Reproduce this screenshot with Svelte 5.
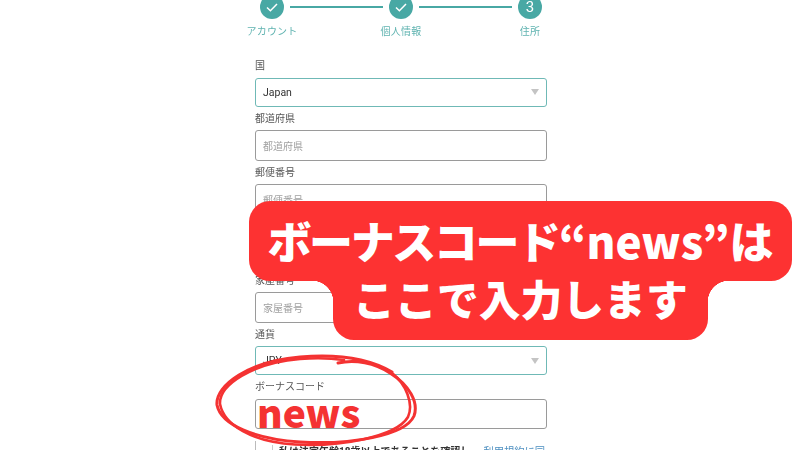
<script lang="ts">
	const steps = [
		{ label: "アカウント", done: true },
		{ label: "個人情報", done: true },
		{ label: "住所", done: false, num: 3 }
	];

	const fields = [
		{ label: "国", value: "Japan", select: true },
		{ label: "都道府県", placeholder: "都道府県" },
		{ label: "郵便番号", placeholder: "郵便番号" },
		{ label: "住所", placeholder: "住所" },
		{ label: "家屋番号", placeholder: "家屋番号" },
		{ label: "通貨", value: "JPY", select: true },
		{ label: "ボーナスコード", placeholder: "" }
	];
</script>

<div class="page">
	<div class="form">
		<div class="stepper">
			{#each steps as step, i}
				<div class="step">
					<span class="dot">
						{#if step.done}
							<svg width="14" height="11" viewBox="0 0 14 11" fill="none">
								<path d="M2 5.5 5.4 8.8 12 2" stroke="#fff" stroke-width="1.5" />
							</svg>
						{:else}
							{step.num}
						{/if}
					</span>
					<span class="step-label">{step.label}</span>
				</div>
				{#if i < steps.length - 1}
					<span class="line"></span>
				{/if}
			{/each}
		</div>

		<div class="fields">
			{#each fields as field}
				<div class="field">
					<span class="label">{field.label}</span>
					<div class="box" class:select={field.select}>
						{#if field.select}
							<span class="value">{field.value}</span>
							<span class="caret"></span>
						{:else}
							<span class="placeholder">{field.placeholder}</span>
						{/if}
					</div>
				</div>
			{/each}
			<div class="terms">
				<span class="check"></span>
				<span class="terms-text">私は法定年齢18歳以上であることを確認し</span>
				<span class="terms-link">利用規約に同</span>
			</div>
		</div>
	</div>

	<div class="callout">
		<div class="bubble top"><span class="kana">ボーナスコード</span>“news”は</div>
		<div class="bubble bottom">ここで入力します</div>
	</div>

	<svg class="scribble" width="240" height="110" viewBox="200 340 240 110" fill="none" stroke="#f43232" stroke-linecap="round">
		<path
			d="M338 363 C355 359 375 363 390 373 C409 385 419 402 414 416 C405 436 350 445 300 442 C255 439 221 425 217 405 C215 385 250 361 300 357 C335 354 368 358 392 372"
			stroke-width="3"
		/>
		<path
			d="M392 373 C406 384 414 404 408 417 C396 437 340 447 295 444.5 C252 442 224 425 220 404 C219 385 252 363 300 359 C318 357.5 330 358 344 360"
			stroke-width="2.6"
		/>
	</svg>
	<div class="news">news</div>
</div>

<style>
	:global(body) {
		margin: 0;
		background: #fff;
	}

	.page {
		position: relative;
		width: 800px;
		height: 450px;
		overflow: hidden;
		font-family: Roboto, "Noto Sans CJK JP", sans-serif;
	}

	.form {
		width: 292px;
		margin-left: 255px;
		filter: blur(0.5px);
	}

	.stepper {
		display: flex;
		align-items: flex-start;
		width: 282px;
		height: 82.5px;
		margin: -5px 0 0 5px;
	}

	.step {
		display: flex;
		flex-direction: column;
		align-items: center;
		width: 24px;
		flex: none;
	}

	.dot {
		width: 24px;
		height: 24px;
		border-radius: 50%;
		background: #48a8a4;
		color: #fff;
		font-size: 15px;
		display: flex;
		align-items: center;
		justify-content: center;
	}

	.step-label {
		margin-top: 3px;
		font-size: 10px;
		line-height: 20px;
		letter-spacing: 0.2px;
		color: #5fb3b0;
		white-space: nowrap;
	}

	.line {
		flex: 1;
		height: 2px;
		margin: 11px 6px 0;
		background: #48a8a4;
	}

	.fields {
		display: flex;
		flex-direction: column;
		gap: 23.5px;
	}

	.field {
		position: relative;
		display: flex;
		flex-direction: column;
	}

	.label {
		position: absolute;
		left: 0;
		bottom: 100%;
		margin-bottom: 4.5px;
		font-size: 10px;
		line-height: 14px;
		color: #555;
		white-space: nowrap;
	}

	.box {
		box-sizing: border-box;
		height: 30.5px;
		border: 1px solid #9a9a9a;
		border-radius: 3px;
		display: flex;
		align-items: center;
		justify-content: space-between;
		padding: 0 7px;
		font-size: 10.5px;
	}

	.box.select {
		height: 29px;
		border-color: #6fb9b6;
	}

	.value {
		color: #333;
	}

	.placeholder {
		font-size: 10px;
		color: #a0a0a0;
	}

	.caret {
		width: 0;
		height: 0;
		border-left: 4.5px solid transparent;
		border-right: 4.5px solid transparent;
		border-top: 6px solid #c4c4c4;
	}

	.terms {
		display: flex;
		align-items: flex-start;
		height: 20px;
		margin-top: -11.5px;
		padding: 4px 0 0 16px;
		border-left: 1px solid #bbb;
		font-size: 10px;
		line-height: 14px;
		white-space: nowrap;
		color: #333;
	}

	.check {
		width: 0;
		height: 12px;
		margin-right: 6px;
		border-left: 1px solid #ccc;
		flex: none;
	}

	.terms-text {
		font-weight: 700;
	}

	.terms-link {
		margin-left: 13px;
		font-size: 10.3px;
		color: #4d8fc0;
	}

	.callout {
		position: absolute;
		left: 249px;
		top: 201px;
		width: 543px;
		display: flex;
		flex-direction: column;
		align-items: center;
		font-family: "Noto Sans CJK JP", sans-serif;
		font-weight: 900;
		color: #fff;
		white-space: nowrap;
	}

	.bubble {
		background: #fd3232;
		position: relative;
		box-sizing: border-box;
		text-align: center;
	}

	.top {
		width: 543px;
		height: 80px;
		border-radius: 21px;
		font-size: 44px;
		line-height: 78px;
	}

	.kana {
		letter-spacing: -2.4px;
	}

	.bottom {
		width: 375px;
		height: 59px;
		border-radius: 0 0 21px 21px;
		font-size: 41.8px;
		line-height: 35px;
	}

	.bottom::before,
	.bottom::after {
		content: "";
		position: absolute;
		top: 0;
		width: 21px;
		height: 21px;
	}

	.bottom::before {
		left: -21px;
		background: radial-gradient(circle at 0 100%, transparent 21px, #fd3232 21.5px);
	}

	.bottom::after {
		right: -21px;
		background: radial-gradient(circle at 100% 100%, transparent 21px, #fd3232 21.5px);
	}

	.scribble {
		position: absolute;
		left: 200px;
		top: 340px;
	}

	.news {
		position: absolute;
		left: 257px;
		top: 386px;
		font-family: "Noto Sans CJK JP", sans-serif;
		font-weight: 900;
		font-size: 39px;
		line-height: 50px;
		color: #f43232;
	}
</style>
